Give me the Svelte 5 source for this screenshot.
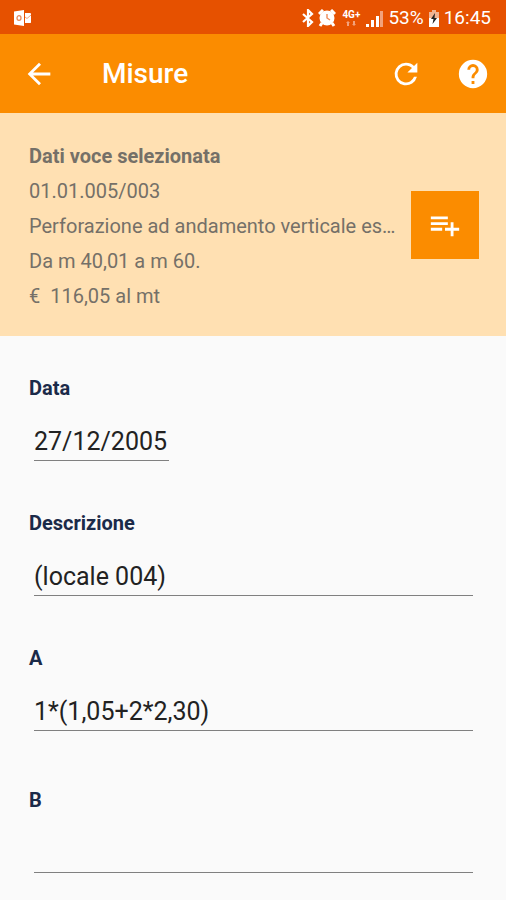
<script>
  let data = $state('27/12/2005');
  let fields = $state([
    { id: 'descrizione', label: 'Descrizione', value: '(locale 004)' },
    { id: 'a', label: 'A', value: '1*(1,05+2*2,30)' },
    { id: 'b', label: 'B', value: '', spaced: true }
  ]);
</script>

<div class="screen">
  <div class="status">
    <svg class="mail" width="18" height="16" viewBox="0 0 18 16" aria-hidden="true">
      <path fill="#fff" d="M0 1.500 10 0v16L0 14.500z" />
      <path fill="#fff" d="M11 3h5.500l.5.5v9l-.5.5H11z" />
      <path fill="none" stroke="#f0a27c" d="M11 7l2 1.500L17 5" />
      <ellipse cx="5" cy="8" rx="2" ry="2.300" fill="none" stroke="#e88a5a" stroke-width="1.300" />
    </svg>
    <div class="indicators">
      <svg width="12" height="18" viewBox="0 0 12 18" aria-hidden="true">
        <path d="M1 5l9 8-4 4V1l4 4-9 8" fill="none" stroke="#fff" stroke-width="2.200" />
      </svg>
      <svg class="alarm" width="18" height="18" viewBox="0 0 18 18" aria-hidden="true">
        <path d="M1 5l4-4M17 5l-4-4M4 14l-2 3M14 14l2 3" stroke="#fff" stroke-width="3" />
        <circle cx="9" cy="9" r="7.500" fill="#fff" />
        <path d="M9 5v4l3 2" fill="none" stroke="#ee8a58" stroke-width="1.400" />
      </svg>
      <span class="network">
        <span>4G+</span>
        <svg width="10" height="5" viewBox="0 0 10 5" aria-hidden="true">
          <path d="M0 2l2-2 2 2v0H3v3H1V2zM6 3h1V0h2v3h1L8 5z" fill="#f2a27c" />
        </svg>
      </span>
      <svg class="signal" width="18" height="17" viewBox="0 0 18 17" aria-hidden="true">
        <path d="M0 14h3v3H0zM5 10h3v7H5zM10 6h3v11h-3z" fill="#fff" />
        <path d="M14 1h3v16h-3z" fill="#f2a27c" />
      </svg>
      <span class="battery-text">53%</span>
      <svg class="battery" width="12" height="17" viewBox="0 0 12 17" aria-hidden="true">
        <path d="M4 0h4v2h3v6H1V2h3z" fill="#f2b392" />
        <path d="M1 8h10v9H1z" fill="#fff" />
        <path d="M7 3 3 9h2.500L4.500 14 9 8H6.500z" fill="#222" />
      </svg>
      <time>16:45</time>
    </div>
  </div>

  <header>
    <button class="icon" aria-label="Indietro">
      <svg width="34" height="34" viewBox="0 0 24 24"><path fill="#fff" d="M20 11H7.830l5.590-5.590L12 4l-8 8 8 8 1.410-1.410L7.830 13H20z" /></svg>
    </button>
    <h1>Misure</h1>
    <button class="icon" aria-label="Aggiorna">
      <svg width="34" height="34" viewBox="0 0 24 24"><path fill="#fff" d="M17.650 6.350A7.960 7.960 0 0 0 12 4a8 8 0 1 0 7.730 10h-2.080A6 6 0 1 1 12 6c1.660 0 3.140.69 4.220 1.780L13 11h7V4z" /></svg>
    </button>
    <button class="icon help" aria-label="Aiuto">
      <svg width="34" height="34" viewBox="0 0 24 24"><path fill="#fff" d="M12 2a10 10 0 1 0 0 20 10 10 0 0 0 0-20zm1 17h-2v-2h2zm2.070-7.750-.9.920C13.450 12.900 13 13.500 13 15h-2v-.5c0-1.100.45-2.100 1.170-2.830l1.240-1.260c.37-.36.590-.86.590-1.410a2 2 0 0 0-4 0H8a4 4 0 0 1 8 0c0 .88-.36 1.680-.93 2.250z" /></svg>
    </button>
  </header>

  <section class="summary">
    <div class="details">
      <h2>Dati voce selezionata</h2>
      <p>01.01.005/003</p>
      <p>Perforazione ad andamento verticale es…</p>
      <p>Da m 40,01 a m 60.</p>
      <p>€&nbsp; 116,05 al mt</p>
    </div>
    <button class="add" aria-label="Aggiungi misura">
      <svg width="34" height="34" viewBox="0 0 24 24"><path fill="#fff" d="M14 10H2v2h12zm0-4H2v2h12zm4 8v-4h-2v4h-4v2h4v4h2v-4h4v-2zM2 16h8v-2H2z" /></svg>
    </button>
  </section>

  <form>
    <div class="field">
      <label for="data">Data</label>
      <input class="date" id="data" type="text" bind:value={data} />
    </div>
    {#each fields as field (field.id)}
      <div class="field" class:spaced={field.spaced}>
        <label for={field.id}>{field.label}</label>
        <input id={field.id} type="text" bind:value={field.value} />
      </div>
    {/each}
  </form>
</div>

<style>
  :global(body) {
    margin: 0;
    background: #fafafa;
  }
  .screen {
    font-family: Roboto, 'Noto Sans', sans-serif;
    font-size: 20px;
    color: #222;
  }
  svg {
    display: block;
    flex: none;
  }
  button {
    border: 0;
    padding: 0;
    cursor: pointer;
  }
  .status {
    display: flex;
    align-items: center;
    justify-content: space-between;
    height: 34px;
    padding: 2px 15px 0 14px;
    box-sizing: border-box;
    background: #e65100;
    color: #fff;
  }
  .indicators {
    display: flex;
    align-items: center;
    gap: 4px;
    font-size: 19px;
    line-height: 20px;
  }
  .network {
    display: flex;
    flex-direction: column;
    align-items: center;
    gap: 2px;
    margin: 0 2px;
    font-size: 10px;
    font-weight: 700;
    line-height: 9px;
  }
  header {
    display: flex;
    align-items: center;
    height: 79px;
    padding: 0 16px 0 22px;
    box-sizing: border-box;
    background: #fb8c00;
  }
  .icon {
    background: none;
  }
  .help {
    margin-left: 33px;
  }
  h1 {
    flex: 1;
    margin: 0 0 0 46px;
    font-size: 28px;
    font-weight: 500;
    line-height: 36px;
    color: #fff;
  }
  .summary {
    display: flex;
    align-items: center;
    gap: 12px;
    padding: 22px 27px 22px 29px;
    background: #ffe0b2;
    color: #757068;
  }
  .details {
    flex: 1;
    min-width: 0;
    padding-top: 4px;
    line-height: 35px;
  }
  h2,
  p {
    margin: 0;
    font-size: 20px;
    overflow: hidden;
    text-overflow: ellipsis;
    white-space: nowrap;
  }
  h2 {
    font-weight: 700;
  }
  .add {
    display: grid;
    place-items: center;
    width: 68px;
    height: 68px;
    background: #fb8c00;
  }
  form {
    display: flex;
    flex-direction: column;
    gap: 50px;
    padding: 40px 28px 26px 29px;
  }
  .field {
    display: flex;
    flex-direction: column;
    gap: 23px;
  }
  .spaced {
    margin-top: 7px;
  }
  label {
    font-weight: 700;
    line-height: 24px;
    color: #1b2a49;
  }
  input {
    height: 38px;
    margin: 0 5px;
    padding: 0;
    box-sizing: border-box;
    border: 0;
    border-bottom: 1px solid #808080;
    border-radius: 0;
    outline: 0;
    background: none;
    font: 25px Roboto, 'Noto Sans', sans-serif;
    color: #222;
  }
  .date {
    align-self: flex-start;
    width: 135px;
  }
</style>
